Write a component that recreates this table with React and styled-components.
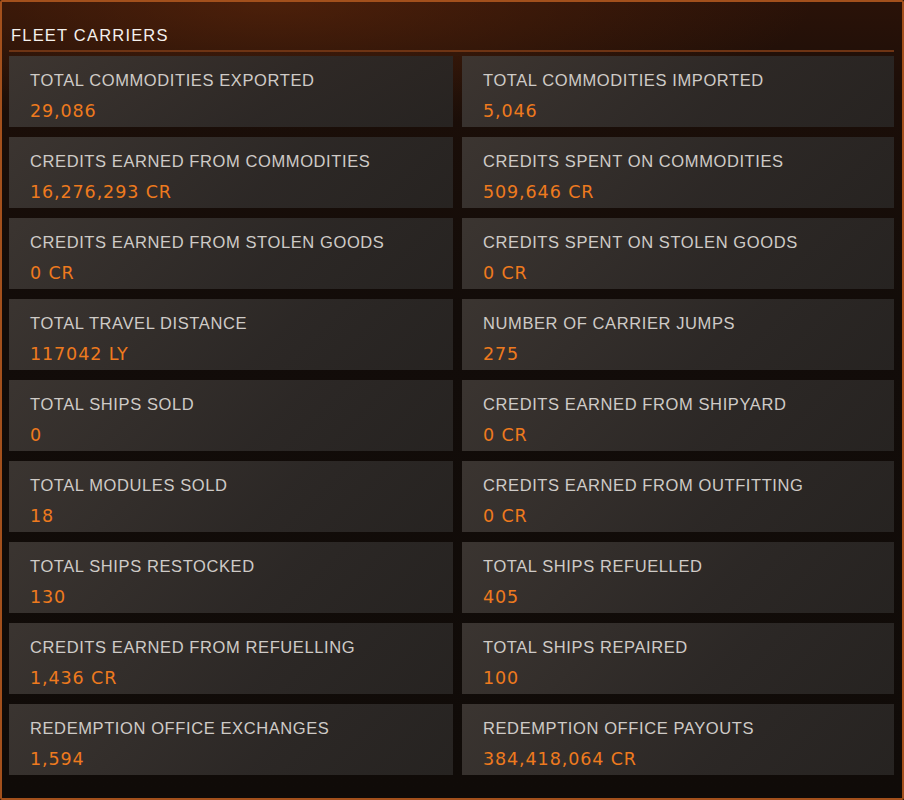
import React from "react";
import styled, { createGlobalStyle } from "styled-components";

const GlobalStyle = createGlobalStyle`
  html, body {
    margin: 0;
    padding: 0;
    background: #0e0907;
  }
`;

const stats = [
  ["TOTAL COMMODITIES EXPORTED", "29,086"],
  ["TOTAL COMMODITIES IMPORTED", "5,046"],
  ["CREDITS EARNED FROM COMMODITIES", "16,276,293 CR"],
  ["CREDITS SPENT ON COMMODITIES", "509,646 CR"],
  ["CREDITS EARNED FROM STOLEN GOODS", "0 CR"],
  ["CREDITS SPENT ON STOLEN GOODS", "0 CR"],
  ["TOTAL TRAVEL DISTANCE", "117042 LY"],
  ["NUMBER OF CARRIER JUMPS", "275"],
  ["TOTAL SHIPS SOLD", "0"],
  ["CREDITS EARNED FROM SHIPYARD", "0 CR"],
  ["TOTAL MODULES SOLD", "18"],
  ["CREDITS EARNED FROM OUTFITTING", "0 CR"],
  ["TOTAL SHIPS RESTOCKED", "130"],
  ["TOTAL SHIPS REFUELLED", "405"],
  ["CREDITS EARNED FROM REFUELLING", "1,436 CR"],
  ["TOTAL SHIPS REPAIRED", "100"],
  ["REDEMPTION OFFICE EXCHANGES", "1,594"],
  ["REDEMPTION OFFICE PAYOUTS", "384,418,064 CR"],
];

const Panel = styled.div`
  box-sizing: border-box;
  width: 904px;
  height: 800px;
  border: 2px solid #a3501c;
  border-radius: 2px;
  padding: 0 8px 0 7px;
  background:
    radial-gradient(ellipse 60% 16% at 30% 0%, rgba(110, 45, 12, 0.5), transparent 100%),
    linear-gradient(180deg, #2a1208 0%, #1b0e08 12%, #120c09 40%, #100b08 100%);
  font-family: "Liberation Sans", Arial, sans-serif;
  display: flex;
  flex-direction: column;
`;

const Title = styled.h1`
  margin: 0;
  padding: 24px 0 5px 2px;
  font-size: 16.5px;
  font-weight: normal;
  letter-spacing: 1.2px;
  color: #f4f1ee;
  border-bottom: 2px solid #6e3414;
`;

const Grid = styled.div`
  display: grid;
  grid-template-columns: 444px 432px;
  grid-auto-rows: 71px;
  column-gap: 9px;
  row-gap: 10px;
  margin-top: 4px;
`;

const Card = styled.div`
  background: linear-gradient(135deg, rgba(62, 56, 52, 0.92) 0%, rgba(46, 42, 40, 0.92) 60%, rgba(40, 37, 35, 0.92) 100%);
  padding: 15px 21px 0;
  display: flex;
  flex-direction: column;
  gap: 12px;
`;

const Label = styled.div`
  font-size: 16.5px;
  letter-spacing: 0.6px;
  color: #cfcbc7;
  line-height: 18px;
`;

const Value = styled.div`
  font-family: "DejaVu Sans", "Liberation Sans", sans-serif;
  font-size: 17.5px;
  letter-spacing: 0.9px;
  color: #ee7a1e;
  line-height: 20px;
`;

export default function App() {
  return (
    <>
      <GlobalStyle />
      <Panel>
        <Title>FLEET CARRIERS</Title>
        <Grid>
          {stats.map(([label, value]) => (
            <Card key={label}>
              <Label>{label}</Label>
              <Value>{value}</Value>
            </Card>
          ))}
        </Grid>
      </Panel>
    </>
  );
}
